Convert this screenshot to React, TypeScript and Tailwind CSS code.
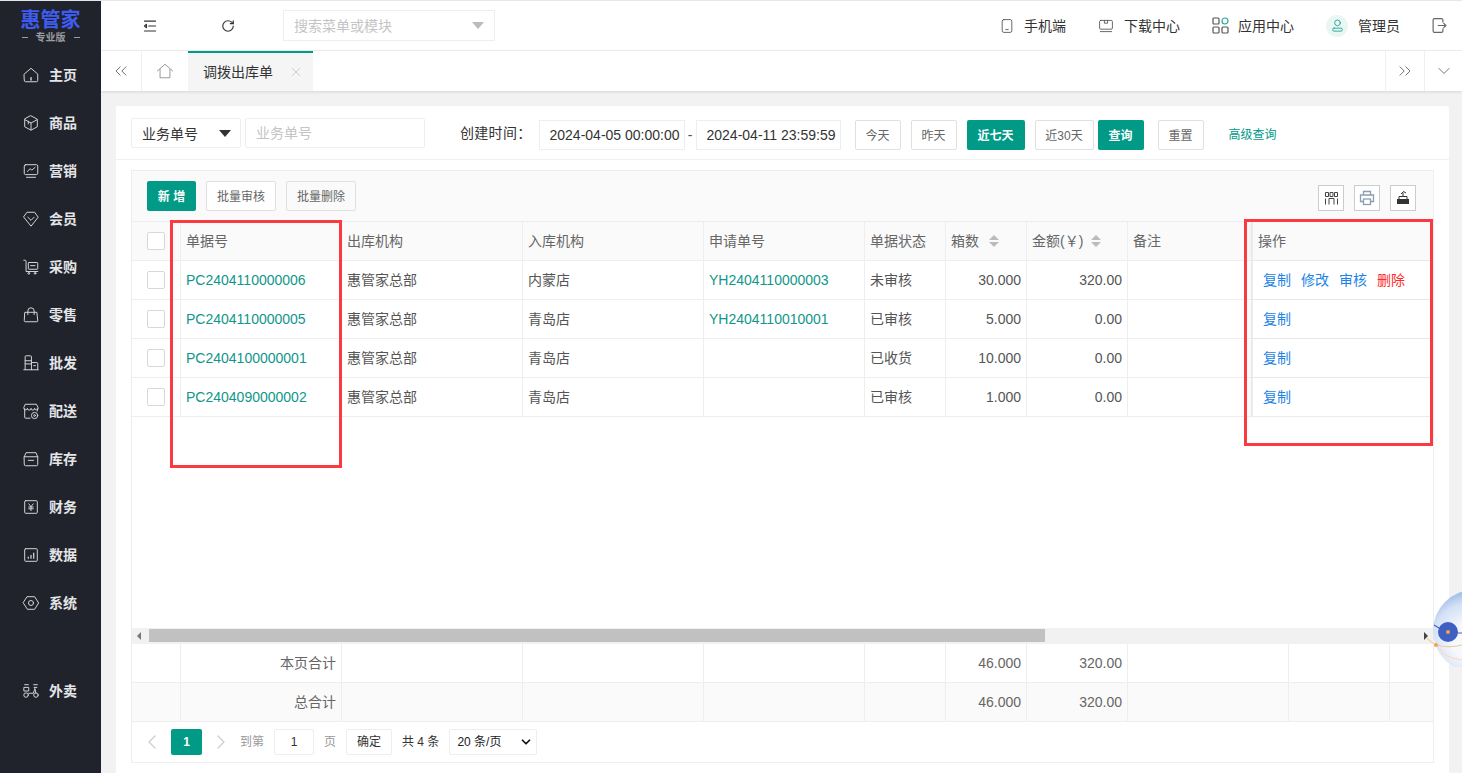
import React from 'react';
import { ChevronDown, ChevronLeft, ChevronRight, ChevronsLeft, ChevronsRight, RotateCw, X } from 'lucide-react';

const FONT = "font-['Liberation_Sans','Noto_Sans_CJK_SC',sans-serif]";

const Svg: React.FC<{ size?: number; children: React.ReactNode; className?: string }> = ({ size = 20, children, className }) => (
  <svg width={size} height={size} viewBox="0 0 20 20" fill="none" stroke="currentColor" strokeWidth={1.1} strokeLinecap="round" strokeLinejoin="round" className={className}>
    {children}
  </svg>
);

const menuIcons: Record<string, React.ReactNode> = {
  主页: <><path d="M2.5 9 10 2.5 17.5 9v7a1.5 1.5 0 0 1-1.5 1.5H4A1.5 1.5 0 0 1 2.5 16z" /><path d="M10 13v2.5" strokeWidth={1.6} /></>,
  商品: <><path d="M10 2 17 5.8v8.4L10 18l-7-3.8V5.8z" /><path d="M3.5 6.5 10 10l6.5-3.5M10 10v7.5M7 8v3" /></>,
  营销: <><rect x="2.5" y="3" width="15" height="11" rx="1.5" /><path d="m6 10.5 3-3 2 1.5 3.5-3M5 17h10" /></>,
  会员: <><path d="M6 2.500h8L18 8l-8 10L2 8z" /><path d="m6.500 8 3.500 3.500L13.500 8" /></>,
  采购: <><path d="M2 2.500h1.500a1 1 0 0 1 1 1V15h13" /><rect x="7" y="5" width="10.500" height="7.500" rx=".8" /><path d="M9.500 8.500h5" /><circle cx="7.500" cy="17" r="1" /><circle cx="14.500" cy="17" r="1" /></>,
  零售: <><path d="M3.500 7h13l1 9.500a1 1 0 0 1-1 1h-13a1 1 0 0 1-1-1z" /><path d="M6.500 9.500V5.500a3.500 3.500 0 0 1 7 0v4" /></>,
  批发: <><path d="M3.500 17.500V3a1 1 0 0 1 1-1h5a1 1 0 0 1 1 1v14.500M10.500 9.500h6a1 1 0 0 1 1 1v7M2 17.500h16" /><path d="M3.500 7.500h7M3.500 11h7M13 13h2" /></>,
  配送: <><path d="M3 7.500V17a1 1 0 0 0 1 1h5M17 7.500V10M4 2.500h12l2 4a2 2 0 0 1-4 .5 2 2 0 0 1-4 0 2 2 0 0 1-4 0 2 2 0 0 1-4-.5z" /><circle cx="14" cy="15" r="3.500" /><circle cx="14" cy="15" r="1" /></>,
  库存: <><path d="M2.500 7.500 4.500 3h11l2 4.500V16a1.500 1.500 0 0 1-1.500 1.500H4A1.500 1.500 0 0 1 2.500 16z" /><path d="M2.500 7.500h15M7 11.500h6" /></>,
  财务: <><rect x="3" y="3" width="14" height="14" rx="1" /><path d="m7.500 6.500 2.500 3 2.500-3M7.500 10h5M7.500 12h5M10 9.500V14" /></>,
  数据: <><rect x="3" y="3" width="14" height="14" rx="1" /><path d="M7 13.500v-1M10 13.500V10.500M13 13.500V8" strokeWidth={1.4} /></>,
  系统: <><path d="M6 3h8l4.500 7-4.500 7H6l-4.500-7z" /><circle cx="10" cy="10" r="2.800" /></>,
  外卖: <><path d="M3 3h4M2.500 6h5v4h-5zM13 3h4M13.500 6h3M14 6l1.500 6.500M7.500 12.500h5l1.500-4" /><circle cx="4.500" cy="14.500" r="2.500" /><circle cx="15.500" cy="14.500" r="2.500" /></>,
};

const menu = ['主页', '商品', '营销', '会员', '采购', '零售', '批发', '配送', '库存', '财务', '数据', '系统'];

const MenuItem: React.FC<{ name: string }> = ({ name }) => (
  <div className="h-12 flex items-center pl-[22px] gap-[9px] text-[#e4e5e7]">
    <span className="text-[#d5d6d8]"><Svg size={18}>{menuIcons[name]}</Svg></span>
    <span className="text-sm font-semibold">{name}</span>
  </div>
);

const Sidebar = () => (
  <aside className="w-[101px] shrink-0 bg-[#20232c] flex flex-col">
    <div className="h-[50px] flex flex-col items-center pt-2">
      <div className="text-[20px] leading-[22px] font-bold text-[#3f5cf0]">惠管家</div>
      <div className="text-[10px] leading-[13px] font-semibold text-[#9a9ca2] flex items-center gap-2">
        <span className="w-[6px] h-px bg-[#9a9ca2]" /><span>专业版</span><span className="w-[6px] h-px bg-[#9a9ca2]" />
      </div>
    </div>
    {menu.map(m => <MenuItem key={m} name={m} />)}
    <div className="mt-10"><MenuItem name="外卖" /></div>
  </aside>
);

const TopAction: React.FC<{ icon: React.ReactNode; label: string; className: string }> = ({ icon, label, className }) => (
  <div className={`flex items-center ${className}`}>
    {icon}
    <span className="text-sm text-[#333]">{label}</span>
  </div>
);

const TopBar = () => (
  <header className="h-[50px] bg-white flex items-center border-b border-[#f0f0f0]">
    <span className="ml-[42px] text-[#333]">
      <Svg size={14}><path d="M2 3h16M8 10h10M2 17h16M2 10l3-2.500v5z" strokeWidth={1.500} /></Svg>
    </span>
    <RotateCw size={14} strokeWidth={2} className="ml-[64px] text-[#333]" />
    <div className="ml-[48px] w-[212px] h-[31px] border border-[#eee] flex items-center justify-between pl-[10px] pr-[10px]">
      <span className="text-sm text-[#c4c4c4]">搜索菜单或模块</span>
      <span className="w-0 h-0 border-x-[6px] border-x-transparent border-t-[7px] border-t-[#bbb]" />
    </div>
    <div className="ml-auto flex items-center">
      <TopAction className="gap-[9px]" label="手机端" icon={<span className="text-[#555]"><Svg size={16}><rect x="4" y="2" width="12" height="16" rx="2" /><path d="M8.500 14.500h3" /></Svg></span>} />
      <TopAction className="ml-[32px] gap-[10px]" label="下载中心" icon={<span className="text-[#555]"><Svg size={16}><rect x="2" y="3" width="16" height="11" rx="1.500" /><path d="M8 3v3.500h4V3M3 17h14" /></Svg></span>} />
      <TopAction className="ml-[32px] gap-[9px]" label="应用中心" icon={
        <svg width="17" height="17" viewBox="0 0 17 17" fill="none" stroke="#555" strokeWidth={1.200}>
          <rect x="1" y="1" width="6" height="6" rx="1" /><rect x="1" y="10" width="6" height="6" rx="1" /><rect x="10" y="10" width="6" height="6" rx="1" />
          <circle cx="13" cy="4" r="3" stroke="#2aa89a" />
        </svg>
      } />
      <div className="ml-[32px] w-[22px] h-[22px] rounded-full bg-[#e9f6f4] flex items-center justify-center text-[#129c8a]">
        <Svg size={15}><circle cx="10" cy="6.500" r="3.800" /><rect x="3.500" y="13.500" width="13" height="4" rx="2" /></Svg>
      </div>
      <span className="ml-[10px] text-sm text-[#333]">管理员</span>
      <span className="ml-[31px] mr-[14px] text-[#666]">
        <Svg size={17}><path d="M14 6V3.500A1.500 1.500 0 0 0 12.500 2H4a1.500 1.500 0 0 0-1.500 1.500v13A1.500 1.500 0 0 0 4 18h8.500a1.500 1.500 0 0 0 1.500-1.500V14M8.500 10h9M15 7.500l2.500 2.500-2.500 2.500" strokeWidth={1.400} /></Svg>
      </span>
    </div>
  </header>
);

const TabBar = () => (
  <div className="h-[40px] bg-white flex shadow-[0_1px_3px_rgba(0,0,0,0.12)] relative">
    <div className="w-[41px] flex items-center justify-center border-r border-[#f0f0f0] text-[#666]"><ChevronsLeft size={20} strokeWidth={1.100} /></div>
    <div className="w-[46px] flex items-center justify-center text-[#999]">
      <Svg size={18}><path d="M1.500 10 10 2.500l8.500 7.500M4.500 8v9.500h11V8" /></Svg>
    </div>
    <div className="w-[125px] bg-[#f5f5f5] border-t-2 border-[#009a87] flex items-center justify-between pl-[15px] pr-[10px]">
      <span className="text-sm text-[#333]">调拨出库单</span>
      <X size={14} strokeWidth={1.200} className="text-[#bbb]" />
    </div>
    <div className="ml-auto w-[39px] flex items-center justify-center border-l border-[#f0f0f0] text-[#666]"><ChevronsRight size={20} strokeWidth={1.100} /></div>
    <div className="w-[38px] flex items-center justify-center border-l border-[#f0f0f0] text-[#666]"><ChevronDown size={20} strokeWidth={1.100} /></div>
  </div>
);

const OutlineBtn: React.FC<{ label: string; className: string }> = ({ label, className }) => (
  <button className={`h-[30px] border border-[#e0e0e0] bg-white rounded-[2px] text-xs text-[#666] pt-px ${className}`}>{label}</button>
);

const TealBtn: React.FC<{ label: string; className: string }> = ({ label, className }) => (
  <button className={`h-[30px] bg-[#009a87] rounded-[2px] text-xs font-semibold text-white pt-px ${className}`}>{label}</button>
);

const FilterRow = () => (
  <div className="h-[54px] flex items-start border-b border-[#f0f0f0] pl-[15px] pt-3">
    <div className="w-[110px] h-[30px] border border-[#eee] rounded-[2px] flex items-center justify-between pl-[10px] pr-[9px]">
      <span className="text-sm text-[#333] pt-px">业务单号</span>
      <span className="w-0 h-0 border-x-[6px] border-x-transparent border-t-[7px] border-t-[#333]" />
    </div>
    <div className="ml-[4px] w-[180px] h-[30px] border border-[#eee] rounded-[2px] flex items-center pl-[10px] text-sm text-[#c4c4c4]">业务单号</div>
    <span className="ml-[35px] h-[30px] leading-[30px] text-sm text-[#333] tracking-[0.3px]">创建时间：</span>
    <div className="mt-[2px] ml-[7px] flex items-center">
      <div className="w-[146px] h-[30px] border border-[#eee] flex items-center pl-[10px] text-sm text-[#333]">2024-04-05 00:00:00</div>
      <span className="w-[11px] text-center text-sm text-[#555]">-</span>
      <div className="w-[145px] h-[30px] border border-[#eee] flex items-center pl-[10px] text-sm text-[#333] whitespace-nowrap">2024-04-11 23:59:59</div>
      <OutlineBtn label="今天" className="ml-[14px] w-[46px]" />
      <OutlineBtn label="昨天" className="ml-[10px] w-[46px]" />
      <TealBtn label="近七天" className="ml-[10px] w-[58px]" />
      <OutlineBtn label="近30天" className="ml-[10px] w-[59px]" />
      <TealBtn label="查询" className="ml-[4px] w-[46px]" />
      <OutlineBtn label="重置" className="ml-[14px] w-[46px]" />
      <span className="ml-[25px] text-xs text-[#009a87]">高级查询</span>
    </div>
  </div>
);

const Checkbox = () => <span className="w-[18px] h-[18px] border border-[#d8d8d8] bg-white rounded-[2px] block" />;

const Sort = () => (
  <span className="flex flex-col gap-[2px]">
    <span className="w-0 h-0 border-x-[5px] border-x-transparent border-b-[5px] border-b-[#bbb]" />
    <span className="w-0 h-0 border-x-[5px] border-x-transparent border-t-[5px] border-t-[#bbb]" />
  </span>
);

const bodyCols = 'grid grid-cols-[49px_161px_181px_181px_161px_81px_81px_101px_124px_1fr]';
const footCols = 'grid grid-cols-[49px_161px_181px_181px_161px_81px_81px_101px_161px_101px_1fr]';
const cell = 'border-r border-[#eee] flex items-center px-[5px] text-sm min-w-0 whitespace-nowrap';

const headers = ['单据号', '出库机构', '入库机构', '申请单号', '单据状态'];

const rows = [
  { no: 'PC2404110000006', from: '惠管家总部', to: '内蒙店', req: 'YH2404110000003', status: '未审核', qty: '30.000', amt: '320.00', all: true },
  { no: 'PC2404110000005', from: '惠管家总部', to: '青岛店', req: 'YH2404110010001', status: '已审核', qty: '5.000', amt: '0.00', all: false },
  { no: 'PC2404100000001', from: '惠管家总部', to: '青岛店', req: '', status: '已收货', qty: '10.000', amt: '0.00', all: false },
  { no: 'PC2404090000002', from: '惠管家总部', to: '青岛店', req: '', status: '已审核', qty: '1.000', amt: '0.00', all: false },
];

const IconBtn: React.FC<{ children: React.ReactNode }> = ({ children }) => (
  <span className="w-[26px] h-[26px] border border-[#ccc] bg-white flex items-center justify-center">{children}</span>
);

const Toolbar = () => (
  <div className="h-[51px] bg-[#fafafa] flex items-center pl-[15px] pr-[17px] border-b border-[#eee] shrink-0">
    <TealBtn label="新 增" className="w-[49px]" />
    <OutlineBtn label="批量审核" className="ml-[10px] w-[70px]" />
    <OutlineBtn label="批量删除" className="ml-[10px] w-[70px] !bg-[#fafafa]" />
    <div className="ml-auto flex gap-[10px] pt-[4px]">
      <IconBtn>
        <svg width="15" height="15" viewBox="0 0 15 15" fill="none" stroke="#444" strokeWidth={1}>
          <path d="M1.500 1.500h3v4h-3zM6 1.500h3v4H6zM10.500 1.500h3v4h-3zM1.500 7.500v6M5 7.500v6M10 7.500v6M13.500 7.500v6M5 7.500h5" />
        </svg>
      </IconBtn>
      <IconBtn>
        <svg width="16" height="16" viewBox="0 0 16 16" fill="none" stroke="#8b9db5" strokeWidth={1.300}>
          <path d="M4.500 5V1.500h7V5M4.500 11.500H1.500V5h13v6.500h-3" /><rect x="4.500" y="9" width="7" height="5.500" />
        </svg>
      </IconBtn>
      <IconBtn>
        <svg width="16" height="16" viewBox="0 0 16 16">
          <path d="M2 9h12v5H2z" fill="#333" /><path d="M4 9V6.500h8V9" fill="none" stroke="#333" /><path d="M8 6V2.500M6 4l2.500-2.500L11 3" fill="none" stroke="#333" />
        </svg>
      </IconBtn>
    </div>
  </div>
);

const Table = () => (
  <div className="relative flex-1 flex flex-col min-h-0">
    <div className={`${bodyCols} h-[39px] bg-[#fafafa] border-b border-[#eee] text-[#666] shrink-0`}>
      <div className={`${cell} justify-center`}><Checkbox /></div>
      {headers.map(h => <div key={h} className={cell}>{h}</div>)}
      <div className={`${cell} gap-[10px]`}>箱数 <Sort /></div>
      <div className={`${cell} gap-[8px]`}>金额(￥) <Sort /></div>
      <div className={cell}>备注</div>
      <div className={`${cell} border-l border-r-0 pl-[5px] shadow-[-2px_0_3px_rgba(0,0,0,0.04)]`}>操作</div>
    </div>
    {rows.map(r => (
      <div key={r.no} className={`${bodyCols} h-[39px] border-b border-[#eee] text-[#555] shrink-0`}>
        <div className={`${cell} justify-center`}><Checkbox /></div>
        <div className={`${cell} text-[#10968a]`}>{r.no}</div>
        <div className={cell}>{r.from}</div>
        <div className={cell}>{r.to}</div>
        <div className={`${cell} text-[#10968a]`}>{r.req}</div>
        <div className={cell}>{r.status}</div>
        <div className={`${cell} justify-end`}>{r.qty}</div>
        <div className={`${cell} justify-end`}>{r.amt}</div>
        <div className={cell} />
        <div className={`${cell} border-l border-r-0 gap-[10px] pl-[10px] text-[#1c84e6] shadow-[-2px_0_3px_rgba(0,0,0,0.04)]`}>
          <span>复制</span>
          {r.all && <span>修改</span>}
          {r.all && <span>审核</span>}
          {r.all && <span className="text-[#ff2a2a]">删除</span>}
        </div>
      </div>
    ))}
    <div className="flex-1" />
    <div className="h-[16px] bg-[#f1f1f1] flex items-center pb-px shrink-0">
      <span className="ml-[5px] w-0 h-0 border-y-[4px] border-y-transparent border-r-[4px] border-r-[#777]" />
      <span className="ml-[8px] w-[896px] h-[13px] bg-[#c1c1c1]" />
      <span className="ml-auto mr-[5px] w-0 h-0 border-y-[4px] border-y-transparent border-l-[4px] border-l-[#444]" />
    </div>
    {[{ t: '本页合计', bg: 'bg-white' }, { t: '总合计', bg: 'bg-[#fafafa]' }].map(f => (
      <div key={f.t} className={`${footCols} ${f.bg} h-[39px] border-b border-[#eee] text-[#666] shrink-0`}>
        <div className={cell} />
        <div className={`${cell} justify-end`}>{f.t}</div>
        <div className={cell} />
        <div className={cell} />
        <div className={cell} />
        <div className={cell} />
        <div className={`${cell} justify-end`}>46.000</div>
        <div className={`${cell} justify-end`}>320.00</div>
        <div className={cell} />
        <div className={cell} />
        <div className={`${cell} border-r-0`} />
      </div>
    ))}
    <div className="h-[40px] shrink-0 flex items-center pl-[8px] text-xs text-[#999]">
      <ChevronLeft size={24} strokeWidth={1.200} className="text-[#ccc]" />
      <span className="ml-[7px] w-[31px] h-[26px] bg-[#009a87] rounded-[2px] flex items-center justify-center font-bold text-white">1</span>
      <ChevronRight size={24} strokeWidth={1.200} className="ml-[7px] text-[#ccc]" />
      <span className="ml-[7px]">到第</span>
      <span className="ml-[10px] w-[40px] h-[26px] border border-[#eee] rounded-[2px] flex items-center justify-center text-[#333]">1</span>
      <span className="ml-[10px]">页</span>
      <span className="ml-[10px] w-[46px] h-[26px] border border-[#eee] rounded-[2px] flex items-center justify-center text-[#333]">确定</span>
      <span className="ml-[10px] text-[#333]">共 4 条</span>
      <span className="ml-[10px] w-[88px] h-[26px] border border-[#eee] rounded-[2px] flex items-center justify-between pl-[7px] pr-[3px] text-[#222]">
        20 条/页
        <ChevronDown size={14} strokeWidth={3} className="text-[#111]" />
      </span>
    </div>
  </div>
);

const Orb = () => (
  <svg width="37" height="76" viewBox="0 0 37 76" className="absolute left-[1425px] top-[590px]">
    <defs>
      <radialGradient id="orb" cx="0.45" cy="0.62" r="0.62">
        <stop offset="0.35" stopColor="#f6f8fd" />
        <stop offset="0.75" stopColor="#d3e0f6" />
        <stop offset="1" stopColor="#9ab8e8" />
      </radialGradient>
    </defs>
    <circle cx="49" cy="40" r="41" fill="url(#orb)" />
    <path d="M9 34l5 3M32 42h5" stroke="#4a63b8" strokeWidth={1.200} />
    <circle cx="23" cy="41" r="10" fill="#3f5fc4" />
    <circle cx="23" cy="41" r="2" fill="#f5a33b" />
    <path d="M2 47c4 5 9 7 14 8 7 1 14 1 21-1" fill="none" stroke="#f6c79a" strokeWidth={1.200} />
    <path d="M15 58c3 6 12 10 22 11" fill="none" stroke="#f9dcc0" strokeWidth={1.200} />
    <circle cx="11" cy="54" r="2" fill="#f5a33b" />
  </svg>
);

export default function App() {
  return (
    <div className={`${FONT} relative w-[1462px] h-[773px] overflow-hidden flex bg-[#f2f2f2] border-t border-[#e6e6e6]`}>
      <Sidebar />
      <main className="flex-1 min-w-0 flex flex-col">
        <TopBar />
        <TabBar />
        <div className="flex-1 min-h-0 pt-[15px] pl-[15px] pr-[13px]">
          <div className="h-full bg-white rounded-t-[2px] flex flex-col">
            <FilterRow />
            <div className="ml-[15px] mr-[15px] mt-[10px] mb-[10px] flex-1 min-h-0 border border-[#eee] flex flex-col">
              <Toolbar />
              <Table />
            </div>
          </div>
        </div>
      </main>
      <div className="absolute left-[170px] top-[219px] w-[172px] h-[248px] border-[3px] border-[#fb3a3f]" />
      <div className="absolute left-[1244px] top-[218px] w-[189px] h-[227px] border-[3px] border-[#fb3a3f]" />
      <Orb />
    </div>
  );
}
